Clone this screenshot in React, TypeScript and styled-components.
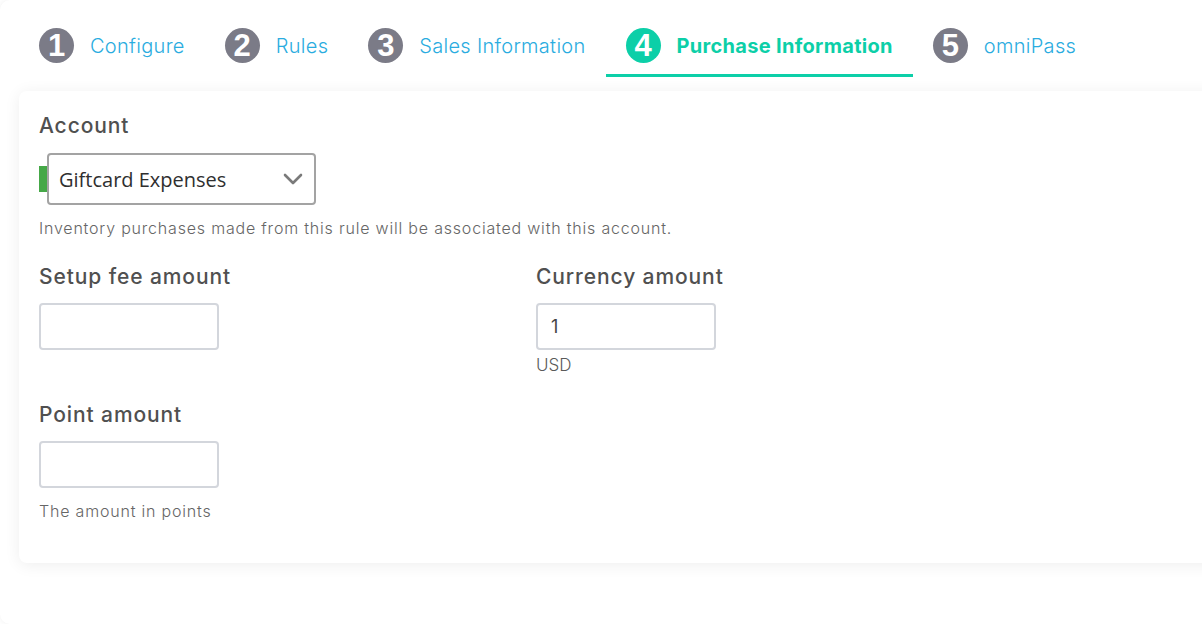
import React from "react";
import styled, { createGlobalStyle } from "styled-components";

const GlobalStyle = createGlobalStyle`
  html, body {
    margin: 0;
    padding: 0;
    background: #ffffff;
    overflow: hidden;
    font-family: "Inter", "Noto Sans", sans-serif;
  }
`;

const steps = [
  { n: 1, label: "Configure" },
  { n: 2, label: "Rules" },
  { n: 3, label: "Sales Information" },
  { n: 4, label: "Purchase Information" },
  { n: 5, label: "omniPass" },
];

function App() {
  const active = 4;
  return (
    <>
      <GlobalStyle />
      <Frame>
        <Tabs>
          {steps.map((s) => (
            <Tab key={s.n} $active={s.n === active}>
              <Badge $active={s.n === active}>{s.n}</Badge>
              <TabLabel $active={s.n === active}>{s.label}</TabLabel>
            </Tab>
          ))}
        </Tabs>
        <Card>
          <Label>Account</Label>
          <SelectRow>
            <Marker />
            <Select>
              <SelectText>Giftcard Expenses</SelectText>
              <svg width="20" height="12" viewBox="0 0 20 12">
                <path
                  d="M2 2 L10 10 L18 2"
                  fill="none"
                  stroke="#7a7a7a"
                  strokeWidth="2.6"
                  strokeLinecap="round"
                  strokeLinejoin="round"
                />
              </svg>
            </Select>
          </SelectRow>
          <Hint $top={12}>
            Inventory purchases made from this rule will be associated with this
            account.
          </Hint>
          <Grid>
            <Field>
              <Label>Setup fee amount</Label>
              <Input />
            </Field>
            <Field>
              <Label>Currency amount</Label>
              <Input defaultValue="1" />
              <Unit>USD</Unit>
            </Field>
            <Field>
              <Label>Point amount</Label>
              <Input />
              <Hint $top={12}>The amount in points</Hint>
            </Field>
          </Grid>
        </Card>
      </Frame>
    </>
  );
}

const Frame = styled.div`
  width: 1216px;
  height: 624px;
  box-sizing: border-box;
  border-radius: 10px;
  box-shadow: 0 0 6px rgba(0, 0, 0, 0.06);
  background: #ffffff;
`;

const Tabs = styled.div`
  display: flex;
  padding-left: 19px;
  padding-top: 28px;
`;

const Tab = styled.div<{ $active: boolean }>`
  display: flex;
  align-items: center;
  gap: 16px;
  padding: 0 20px 11px;
  border-bottom: 3px solid ${(p) => (p.$active ? "#0ccfa8" : "transparent")};
`;

const Badge = styled.div<{ $active: boolean }>`
  width: 35px;
  height: 35px;
  border-radius: 50%;
  background: ${(p) => (p.$active ? "#0ccfa8" : "#7b7b87")};
  color: #ffffff;
  display: flex;
  align-items: center;
  justify-content: center;
  font-family: "Liberation Sans", Arial, sans-serif;
  font-weight: 700;
  font-size: 31px;
  line-height: 1;
`;

const TabLabel = styled.span<{ $active: boolean }>`
  font-size: 20px;
  font-weight: ${(p) => (p.$active ? 700 : 300)};
  color: ${(p) => (p.$active ? "#0ccfa8" : "#2aace0")};
  letter-spacing: 0.3px;
`;

const Card = styled.div`
  margin: 14px 0 0 19px;
  width: 1210px;
  box-sizing: border-box;
  padding: 21px 20px 41px;
  background: #ffffff;
  border-radius: 8px;
  box-shadow: 0 2px 16px rgba(0, 0, 0, 0.07);
`;

const Label = styled.div`
  font-size: 21px;
  line-height: 28px;
  font-weight: 500;
  letter-spacing: 0.9px;
  color: #505050;
`;

const SelectRow = styled.div`
  display: flex;
  align-items: center;
  margin-top: 13px;
`;

const Marker = styled.div`
  width: 8px;
  height: 26px;
  background: #45a847;
`;

const Select = styled.div`
  width: 269px;
  height: 52px;
  box-sizing: border-box;
  border: 2px solid #a3a3a3;
  border-radius: 4px;
  display: flex;
  align-items: center;
  justify-content: space-between;
  padding: 0 11px 0 10px;
`;

const SelectText = styled.span`
  font-family: "Open Sans", sans-serif;
  font-size: 20px;
  color: #2f2f2f;
`;

const Hint = styled.div<{ $top: number }>`
  margin-top: ${(p) => p.$top}px;
  font-size: 16px;
  line-height: 22px;
  font-weight: 300;
  letter-spacing: 0.8px;
  color: #666666;
`;

const Grid = styled.div`
  display: grid;
  grid-template-columns: 497px 1fr;
  row-gap: 25px;
  margin-top: 24px;
`;

const Field = styled.div`
  display: flex;
  flex-direction: column;
  align-items: flex-start;
`;

const Input = styled.input`
  margin-top: 12px;
  width: 180px;
  height: 47px;
  box-sizing: border-box;
  border: 2px solid #d3d6dc;
  border-radius: 4px;
  padding: 0 13px;
  font-family: "Inter", sans-serif;
  font-size: 18px;
  color: #444444;
  outline: none;
`;

const Unit = styled.div`
  margin-top: 4px;
  font-size: 17px;
  line-height: 22px;
  color: #5a5a5a;
  font-weight: 300;
`;

export default App;
